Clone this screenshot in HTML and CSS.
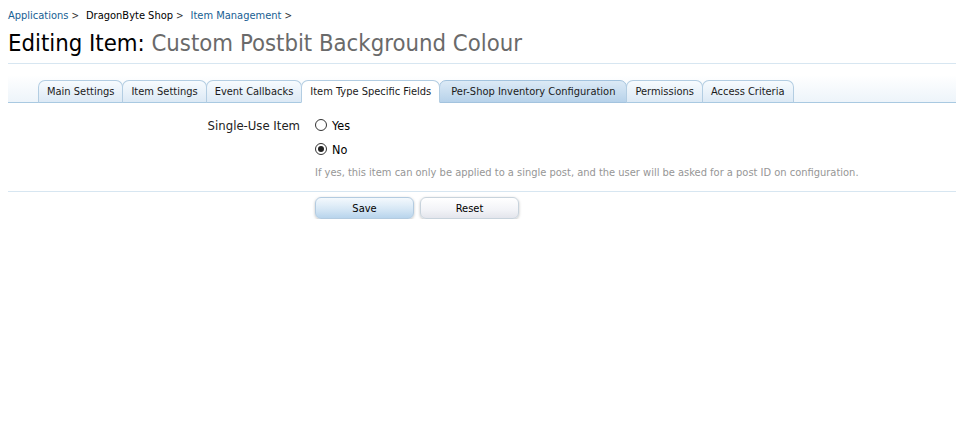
FILE: index.html
```html
<!DOCTYPE html>
<html>
<head>
<meta charset="utf-8">
<link rel="stylesheet" href="styles.css">
</head>
<body>
<div class="page">
  <div class="breadcrumb">
    <a class="crumb link" href="#">Applications</a><span class="sep">&gt;</span>
    <span class="crumb">DragonByte Shop</span><span class="sep">&gt;</span>
    <a class="crumb link" href="#">Item Management</a><span class="sep">&gt;</span>
  </div>
  <h1 class="title">Editing Item: <em>Custom Postbit Background Colour</em></h1>
  <div class="tabstrip">
    <ul class="tabs">
      <li class="tab">Main Settings</li>
      <li class="tab">Item Settings</li>
      <li class="tab">Event Callbacks</li>
      <li class="tab active">Item Type Specific Fields</li>
      <li class="tab hover">Per-Shop Inventory Configuration</li>
      <li class="tab">Permissions</li>
      <li class="tab">Access Criteria</li>
    </ul>
  </div>
  <div class="formrow">
    <div class="label">Single-Use Item</div>
    <div class="control">
      <label class="radio"><span class="rb"></span>Yes</label>
      <label class="radio"><span class="rb checked"></span>No</label>
      <p class="explain">If yes, this item can only be applied to a single post, and the user will be asked for a post ID on configuration.</p>
    </div>
  </div>
  <div class="submitrow">
    <button class="btn primary">Save</button>
    <button class="btn">Reset</button>
  </div>
</div>
</body>
</html>
```
FILE: styles.css
```css
html, body {
  margin: 0;
  padding: 0;
  background: #fff;
}
body {
  font-family: "DejaVu Sans Condensed", "DejaVu Sans", sans-serif;
  font-size: 11px;
  color: #000;
}
.page {
  margin-left: 8px;
}
.breadcrumb {
  padding-top: 9px;
  height: 13px;
  line-height: 13px;
  display: flex;
  align-items: center;
}
.crumb {
  color: #000;
  text-decoration: none;
}
.crumb.link {
  color: #176093;
}
.sep {
  margin: 0 7px 0 3px;
  color: #333;
  font-size: 10px;
}
.title {
  margin: 0;
  padding-top: 7px;
  font-size: 23.7px;
  font-weight: normal;
  line-height: 28px;
  height: 34px;
  border-bottom: 1px solid #d7e6f1;
}
.title em {
  font-style: normal;
  color: #6a6a6a;
}
.tabstrip {
  margin-top: 2px;
  height: 36px;
  background: linear-gradient(to bottom, #ffffff 0%, #ffffff 25%, #edf4fa 100%);
  border-bottom: 1px solid #a9c9e1;
  display: flex;
  align-items: flex-end;
}
.tabs {
  list-style: none;
  margin: 0 0 0 30px;
  padding: 0;
  display: flex;
  align-items: flex-end;
  margin-bottom: -1px;
}
.tab {
  height: 21px;
  line-height: 21px;
  padding: 0 8px;
  border: 1px solid #b3cde2;
  border-bottom: 1px solid #a9c9e1;
  border-radius: 7px 7px 0 0;
  background: linear-gradient(to bottom, #f7fbfe 0%, #dce9f5 100%);
  color: #1a1a1a;
  margin-right: -1px;
  white-space: nowrap;
}
.tab.active {
  background: #fff;
  border-bottom-color: #fff;
  position: relative;
  z-index: 1;
}
.tab.hover {
  background: linear-gradient(to bottom, #dceaf6 0%, #b7d2ea 100%);
  border-color: #a3c3de;
  padding: 0 11px;
}
.formrow {
  display: flex;
  padding-top: 13px;
  padding-bottom: 11px;
  border-bottom: 1px solid #d7e6f1;
}
.label {
  width: 292px;
  text-align: right;
  font-size: 13px;
  line-height: 18px;
  color: #222;
  padding-top: 1px;
}
.control {
  padding-left: 15px;
}
.radio {
  display: flex;
  align-items: center;
  height: 24px;
  font-size: 12.5px;
  color: #000;
  margin-top: -3px;
}
.radio + .radio {
  margin-top: 0;
}
.rb {
  width: 10px;
  height: 10px;
  border: 1.2px solid #333;
  border-radius: 50%;
  margin-right: 5px;
  box-sizing: content-box;
  background: #fff;
  position: relative;
}
.rb.checked::after {
  content: "";
  position: absolute;
  left: 2px;
  top: 2px;
  width: 6px;
  height: 6px;
  border-radius: 50%;
  background: #222;
}
.explain {
  margin: 5px 0 0 0;
  font-size: 11px;
  color: #969696;
  line-height: 14px;
}
.submitrow {
  padding-top: 5px;
  padding-left: 307px;
  display: flex;
  gap: 6px;
}
.btn {
  font-family: inherit;
  font-size: 11px;
  width: 99px;
  height: 22px;
  border-radius: 6px;
  border: 1px solid #c8d3dc;
  background: linear-gradient(to bottom, #ffffff 0%, #f2f3f7 60%, #e3e5ec 100%);
  box-shadow: 0 1px 3px rgba(0,0,0,0.25);
  color: #000;
  padding: 0;
}
.btn.primary {
  background: linear-gradient(to bottom, #f4f9fd 0%, #d6e7f5 55%, #b8d4ec 100%);
  border-color: #b3cbe0;
}
```
